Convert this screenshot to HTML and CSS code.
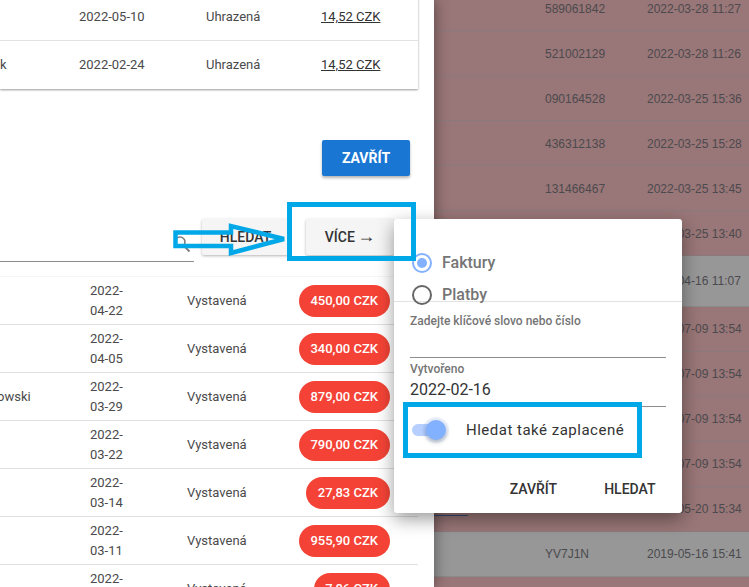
FILE: index.html
```html
<!DOCTYPE html>
<html lang="cs">
<head>
<meta charset="utf-8">
<title>Faktury</title>
<link rel="stylesheet" href="styles.css">
</head>
<body>
<div class="screen">
  <main class="panel">
    <section class="card">
      <div class="paid-row"><span class="name"></span><span class="date">2022-05-10</span><span class="state">Uhrazená</span><a class="amount">14,52 CZK</a></div>
      <div class="paid-row"><span class="name">k</span><span class="date">2022-02-24</span><span class="state">Uhrazená</span><a class="amount">14,52 CZK</a></div>
    </section>
    <div class="close-bar"><button class="btn-primary">ZAVŘÍT</button></div>
    <div class="toolbar">
      <div class="search">
        <svg class="search-icon" viewBox="0 0 18 18" width="18" height="18"><circle cx="7" cy="7" r="5" fill="none" stroke="#7d7d7d" stroke-width="1.6"/><path d="M11 11l5.5 5.5" stroke="#7d7d7d" stroke-width="1.8" fill="none"/></svg>
      </div>
      <button class="btn-light btn-search">HLEDAT</button>
      <button class="btn-light btn-more">VÍCE <span class="btn-arrow">→</span></button>
    </div>
    <section class="list">
      <div class="due-row"><span class="due-name"></span><span class="due-date">2022-<br>04-22</span><span class="due-state">Vystavená</span><span class="chip-cell"><span class="chip">450,00 CZK</span></span></div>
      <div class="due-row"><span class="due-name"></span><span class="due-date">2022-<br>04-05</span><span class="due-state">Vystavená</span><span class="chip-cell"><span class="chip">340,00 CZK</span></span></div>
      <div class="due-row"><span class="due-name due-name-cut">owski</span><span class="due-date">2022-<br>03-29</span><span class="due-state">Vystavená</span><span class="chip-cell"><span class="chip">879,00 CZK</span></span></div>
      <div class="due-row"><span class="due-name"></span><span class="due-date">2022-<br>03-22</span><span class="due-state">Vystavená</span><span class="chip-cell"><span class="chip">790,00 CZK</span></span></div>
      <div class="due-row"><span class="due-name"></span><span class="due-date">2022-<br>03-14</span><span class="due-state">Vystavená</span><span class="chip-cell"><span class="chip">27,83 CZK</span></span></div>
      <div class="due-row"><span class="due-name"></span><span class="due-date">2022-<br>03-11</span><span class="due-state">Vystavená</span><span class="chip-cell"><span class="chip">955,90 CZK</span></span></div>
      <div class="due-row"><span class="due-name"></span><span class="due-date">2022-<br>03-04</span><span class="due-state">Vystavená</span><span class="chip-cell"><span class="chip">7,86 CZK</span></span></div>
    </section>
  </main>
  <aside class="backdrop">
    <div class="bg-row"><span class="bg-id">589061842</span><span>2022-03-28 11:27</span></div>
    <div class="bg-row"><span class="bg-id">521002129</span><span>2022-03-28 11:26</span></div>
    <div class="bg-row"><span class="bg-id">090164528</span><span>2022-03-25 15:36</span></div>
    <div class="bg-row"><span class="bg-id">436312138</span><span>2022-03-25 15:28</span></div>
    <div class="bg-row"><span class="bg-id">131466467</span><span>2022-03-25 13:45</span></div>
    <div class="bg-row"><span class="bg-id">131466466</span><span>2022-03-25 13:40</span></div>
    <div class="bg-row bg-gray bg-tall"><span class="bg-id">YV7J1P</span><span>2022-04-16 11:07</span></div>
    <div class="bg-row"><span class="bg-id">YV7J1A</span><span>2021-07-09 13:54</span></div>
    <div class="bg-row"><span class="bg-id">YV7J1B</span><span>2021-07-09 13:54</span></div>
    <div class="bg-row"><span class="bg-id">YV7J1C</span><span>2021-07-09 13:54</span></div>
    <div class="bg-row"><span class="bg-id">YV7J1D</span><span>2021-07-09 13:54</span></div>
    <div class="bg-row"><span class="bg-id">YV7J1E</span><span>2019-05-20 15:34</span></div>
    <div class="bg-row bg-gray"><span class="bg-id">YV7J1N</span><span>2019-05-16 15:41</span></div>
    <div class="bg-row"></div>
  </aside>

  <div class="peek-link"></div>

  <form class="popup">
    <div class="radios">
      <div class="radio-item"><span class="radio radio-on"></span><span class="radio-text">Faktury</span></div>
      <div class="radio-item"><span class="radio"></span><span class="radio-text">Platby</span></div>
    </div>
    <div class="fields">
      <div class="field-label">Zadejte klíčové slovo nebo číslo</div>
      <div class="field-box field-box-empty"></div>
      <div class="field-label field-label-second">Vytvořeno</div>
      <div class="field-box">2022-02-16</div>
    </div>
    <div class="toggle-row">
      <span class="toggle"><span class="toggle-thumb"></span></span>
      <span class="toggle-text">Hledat také zaplacené</span>
    </div>
    <div class="actions"><span>ZAVŘÍT</span><span>HLEDAT</span></div>
  </form>

  <div class="mark mark-more"></div>
  <div class="mark mark-toggle"></div>
  <svg class="mark-arrow" width="120" height="36" viewBox="0 0 120 36"><path d="M3.5 9.5H59V3L112 16 59 30V23H3.5Z" fill="none" stroke="#00a8e8" stroke-width="4.5"/></svg>
</div>
</body>
</html>
```
FILE: styles.css
```css
* { box-sizing: border-box; }
html, body { margin: 0; padding: 0; }
body { font-family: Roboto, "Liberation Sans", sans-serif; }
.screen { position: relative; display: flex; width: 749px; height: 587px; overflow: hidden; background: #997677; }

.panel { position: relative; z-index: 2; flex: 0 0 434px; height: 587px; padding-right: 16px; background: #fff; box-shadow: 0 0 14px rgba(0,0,0,.45); overflow: hidden; }
.card { margin-top: -7px; background: #fff; box-shadow: 0 1px 2px rgba(0,0,0,.4); }
.paid-row { display: flex; align-items: center; height: 47.5px; font-size: 13px; color: #4a4a4a; border-bottom: 1px solid #e2e2e2; }
.paid-row:last-child { height: 48.5px; border-bottom: 0; }
.name { flex: 0 0 79px; }
.date { flex: 0 0 127px; }
.state { flex: 0 0 115px; }
.amount { color: #333; text-decoration: underline; }

.close-bar { display: flex; justify-content: flex-end; padding: 51px 8px 0 0; }
.btn-primary { width: 88px; height: 36px; border: 0; border-radius: 2px; background: #1976d2; color: #fff; font: 700 14px Roboto, sans-serif; box-shadow: 0 2px 3px rgba(0,0,0,.3); padding: 0; }

.toolbar { display: flex; align-items: flex-start; margin-top: 43px; height: 57px; }
.search { position: relative; flex: 0 0 194px; height: 43px; border-bottom: 1px solid #8c8c8c; }
.search-icon { position: absolute; right: 3px; top: 16px; }
.btn-light { height: 36px; border: 0; border-radius: 2px; background: #f5f5f5; color: #333; font: 500 14px Roboto, sans-serif; box-shadow: 0 1px 3px rgba(0,0,0,.3); padding: 0; }
.btn-arrow { font-family: "Liberation Sans", sans-serif; font-size: 18px; font-weight: 400; line-height: 14px; margin-left: -1px; }
.btn-search { width: 87px; margin-left: 8px; }
.btn-more { width: 88px; margin-left: 17px; }

.list { border-top: 1px solid #f6f6f6; }
.due-row { display: flex; align-items: center; height: 48px; font-size: 13px; line-height: 19.5px; color: #4a4a4a; border-bottom: 1px solid #e0e0e0; }
.due-name { flex: 0 0 90px; }
.due-name-cut { text-indent: -3px; }
.due-date { flex: 0 0 97px; }
.due-state { flex: 0 0 90px; }
.chip-cell { flex: 0 0 113px; display: flex; justify-content: flex-end; }
.chip { height: 32px; line-height: 32px; padding: 0 12px 0 11.5px; border-radius: 16px; background: #f44336; color: #fff; font-weight: 500; white-space: nowrap; }

.backdrop { flex: 1; margin-top: -14px; font: 12px "Liberation Sans", Arial, sans-serif; color: #4b4a4e; }
.bg-row { display: flex; align-items: center; height: 45px; padding: 1px 0 0 111px; border-bottom: 1px solid #8b7a7b; }
.bg-id { flex: 0 0 102px; }
.bg-gray { background: #979797; border-bottom-color: #8a8a8a; }
.bg-tall { height: 50.5px; }

.peek-link { position: absolute; z-index: 3; left: 434px; top: 515px; width: 34px; height: 1px; background: #34486e; }

.popup { position: absolute; z-index: 4; left: 394px; top: 219px; width: 288px; height: 294px; background: #fff; border-radius: 3px; box-shadow: 0 6px 18px rgba(0,0,0,.4); }
.radios { height: 82.5px; padding: 28px 0 0 18px; border-bottom: 1px solid #e2e2e2; }
.radio-item { display: flex; align-items: center; gap: 10px; height: 32px; font-size: 16px; font-weight: 500; color: #757575; }
.radio-text { margin-top: -2px; }
.radio { position: relative; flex: 0 0 20px; height: 20px; border: 2px solid #666; border-radius: 50%; }
.radio-on { border-color: #82b1ff; }
.radio-on::after { content: ""; position: absolute; left: 3px; top: 3px; width: 10px; height: 10px; border-radius: 50%; background: #82b1ff; }

.fields { padding: 12px 16px 0; }
.field-label { height: 14px; font-size: 12px; line-height: 14px; font-weight: 500; color: #757575; }
.field-label-second { margin-top: 4px; }
.field-box { width: 256px; height: 31px; font-size: 16px; line-height: 27px; color: #333; border-bottom: 1px solid #8c8c8c; }
.field-box-empty { height: 30px; }

.toggle-row { display: flex; align-items: center; height: 24px; margin: 11px 0 0 18px; }
.toggle { position: relative; flex: 0 0 28px; height: 12px; border-radius: 6px; background: #b6cfff; }
.toggle-thumb { position: absolute; right: -6px; top: -4px; width: 20px; height: 20px; border-radius: 50%; background: #82b1ff; box-shadow: 0 2px 5px rgba(0,0,0,.3), 0 0 0 3px rgba(130,177,255,.15); }
.toggle-text { margin-left: 26px; font-size: 15px; letter-spacing: .5px; color: #333; }

.actions { display: flex; justify-content: flex-end; gap: 47px; margin-top: 38px; padding-right: 26.5px; height: 18px; font-size: 14px; line-height: 18px; font-weight: 500; color: #333; }

.mark { position: absolute; z-index: 5; border: 5px solid #00a8e8; }
.mark-more { left: 287px; top: 202px; width: 129px; height: 59px; }
.mark-toggle { left: 403px; top: 402px; width: 239px; height: 56px; }
.mark-arrow { position: absolute; z-index: 5; left: 172px; top: 223px; }
```
